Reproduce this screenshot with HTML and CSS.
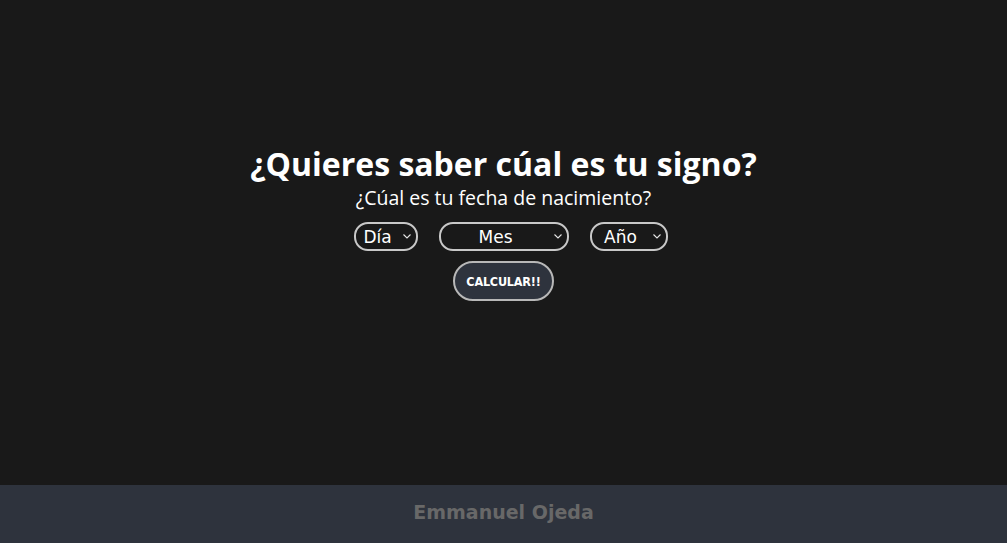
FILE: index.html
```html
<!DOCTYPE html>
<html lang="es">
<head>
<meta charset="utf-8">
<title>Signo</title>
<link rel="stylesheet" href="styles.css">
</head>
<body>
<main class="main">
  <h1 class="title">¿Quieres saber cúal es tu signo?</h1>
  <p class="subtitle">¿Cúal es tu fecha de nacimiento?</p>
  <form class="form">
    <div class="selects">
      <span class="sel-wrap">
        <select class="sel sel-dia"><option>Día</option></select>
        <svg class="chev" width="8" height="5" viewBox="0 0 8 5"><path d="M0.5 0.5 L4 4 L7.5 0.5" fill="none" stroke="#e6e6e6" stroke-width="1.1"/></svg>
      </span>
      <span class="sel-wrap">
        <select class="sel sel-mes"><option>Mes</option></select>
        <svg class="chev" width="8" height="5" viewBox="0 0 8 5"><path d="M0.5 0.5 L4 4 L7.5 0.5" fill="none" stroke="#e6e6e6" stroke-width="1.1"/></svg>
      </span>
      <span class="sel-wrap">
        <select class="sel sel-anio"><option>Año</option></select>
        <svg class="chev" width="8" height="5" viewBox="0 0 8 5"><path d="M0.5 0.5 L4 4 L7.5 0.5" fill="none" stroke="#e6e6e6" stroke-width="1.1"/></svg>
      </span>
    </div>
    <button type="button" class="btn">CALCULAR!!</button>
  </form>
</main>
<footer class="footer">Emmanuel Ojeda</footer>
</body>
</html>
```
FILE: styles.css
```css
* { box-sizing: border-box; }
html, body { margin: 0; padding: 0; }
body {
  background: #191919;
  color: #fff;
  font-family: "Comic Sans MS", "Open Sans", sans-serif;
  height: 543px;
  display: flex;
  flex-direction: column;
}
.main {
  height: 485px;
  display: flex;
  flex-direction: column;
  align-items: center;
  padding-top: 142px;
}
.title {
  margin: 0;
  font-size: 32px;
  font-weight: 700;
  line-height: 44px;
}
.subtitle {
  margin: 0;
  font-size: 19.5px;
  line-height: 24px;
}
.form {
  display: flex;
  flex-direction: column;
  align-items: center;
  margin-top: 12px;
  gap: 10px;
}
.selects {
  display: flex;
  gap: 21px;
  padding-left: 14px;
}
.sel-wrap {
  position: relative;
  display: block;
}
.sel {
  display: block;
  height: 29px;
  -webkit-appearance: none;
  appearance: none;
  background: transparent;
  color: #fff;
  border: 2px solid #c8c8c8;
  border-radius: 14px;
  font-family: "DejaVu Sans", sans-serif;
  font-size: 17px;
  text-align: center;
  text-align-last: center;
  padding: 0 20px 0 4px;
  outline: none;
}
.sel option { background: #191919; }
.chev {
  position: absolute;
  right: 7px;
  top: 12px;
  pointer-events: none;
}
.sel-dia { width: 64px; }
.sel-mes { width: 130px; }
.sel-anio { width: 78px; }
.btn {
  width: 101px;
  height: 40px;
  background: #2e333d;
  color: #fff;
  border: 2px solid #b8b8b8;
  border-radius: 20px;
  font-family: "DejaVu Sans", sans-serif;
  font-stretch: condensed;
  font-weight: 700;
  font-size: 12.5px;
  letter-spacing: -0.2px;
  padding: 0;
}
.footer {
  height: 58px;
  background: #2e333d;
  color: #686868;
  display: flex;
  align-items: center;
  justify-content: center;
  padding-bottom: 4px;
  font-family: "DejaVu Sans", sans-serif;
  font-weight: 700;
  font-size: 19px;
}
```
